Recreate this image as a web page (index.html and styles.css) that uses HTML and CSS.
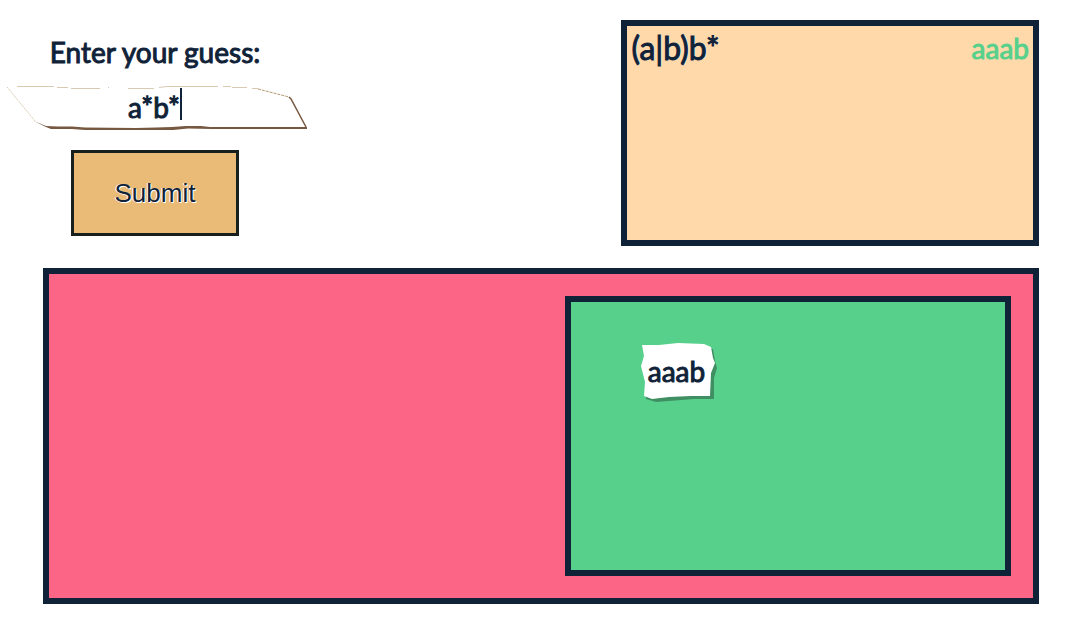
FILE: index.html
```html
<!DOCTYPE html>
<html lang="en">
<head>
  <meta charset="utf-8">
  <meta name="viewport" content="width=device-width, initial-scale=1">
  <title>Guess the expression</title>
  <link rel="stylesheet" href="styles.css">
</head>
<body>
  <main class="game">
    <div class="top">
      <form class="guess">
        <label class="guess-label" for="guess">Enter your guess:</label>
        <div class="guess-field">
          <svg class="guess-paper" viewBox="0 0 300 46" preserveAspectRatio="none" aria-hidden="true">
            <g fill="none" stroke="#d9cab2" stroke-width="1">
              <path d="M-1 3 27 37" stroke-dasharray="2 1"/>
              <path d="M9 2.500H46M49 3.500H60M63 4.500H92M100 3.500h1M120 4.500H146M151 3.500 159 2.500H210M215 2.500H223M224 3.500H239M244 4.500H250"/>
              <path d="M250 5 281 13" stroke="#b79a72" stroke-dasharray="3 1"/>
            </g>
            <path d="M281 13 283 15 298 43" fill="none" stroke="#775840" stroke-width="1.500"/>
            <path d="M26 37 38 42 50 42.500H64L77 43.500 128 44 148 43.500 164 43 178 42 193 42 202 43H299V45H204L180 44.500 165 46H77L64 45H43L38 43Z" fill="#775840"/>
          </svg>
          <input class="guess-input" id="guess" type="text" value="a*b*" autocomplete="off" spellcheck="false">
          <span class="caret" aria-hidden="true"></span>
        </div>
        <button class="submit" type="submit">Submit</button>
      </form>
      <section class="history" aria-label="Previous guesses">
        <div class="history-row">
          <span class="expression">(a|b)b*</span>
          <span class="sample">aaab</span>
        </div>
      </section>
    </div>
    <section class="arena" aria-label="Rejected words">
      <div class="accepted">
        <div class="word">
          <svg class="word-paper" viewBox="0 0 78 60" aria-hidden="true">
            <path d="M5 6 41 5 74 8 76 20 78 27 75 37V58H55L17 61 7 58Z" fill="#3f8f63"/>
            <path d="M3 4 20 4 39 2 65 3 72 6 74 17 76 22 72 32 71 55H52L30 56 13 58 5 55 6 41 2 25 5 15Z" fill="#fff"/>
          </svg>
          <span class="word-text">aaab</span>
        </div>
      </div>
    </section>
  </main>
</body>
</html>
```
FILE: styles.css
```css
* {
  box-sizing: border-box;
}

body {
  margin: 0;
  background: #fff;
  color: #102238;
  font-family: "Lato", sans-serif;
  font-size: 28px;
  line-height: 40px;
}

.game {
  display: flex;
  flex-direction: column;
  gap: 22px;
  min-height: 100vh;
  padding: 20px 37px 27px 8px;
}

.top {
  display: flex;
  justify-content: space-between;
  gap: 24px;
}

.guess {
  display: flex;
  flex-direction: column;
  align-items: center;
  width: 300px;
  padding-top: 12px;
}

.guess-label {
  margin-right: 6px;
  -webkit-text-stroke: 1px #102238;
}

.guess-field {
  position: relative;
  width: 100%;
  height: 46px;
  margin: 12px 0 20px;
}

.guess-paper {
  position: absolute;
  inset: 0;
  width: 100%;
  height: 100%;
  overflow: visible;
}

.guess-input {
  position: relative;
  width: 100%;
  height: 46px;
  padding: 0 8px 0 0;
  border: 0;
  outline: 0;
  background: transparent;
  color: inherit;
  font: inherit;
  text-align: center;
  -webkit-text-stroke: 1px #102238;
}

.caret {
  position: absolute;
  top: 4px;
  left: 172px;
  width: 2px;
  height: 32px;
  background: #102238;
}

.submit {
  width: 168px;
  height: 86px;
  margin-right: 6px;
  padding: 0;
  border: 3px solid #17201d;
  border-radius: 0;
  background: #e9bb77;
  color: #102238;
  font-family: "Liberation Sans", Arial, sans-serif;
  font-size: 26px;
  text-shadow: 1px 1px #fff, -1px 0 #fff;
}

.history {
  width: 40.5%;
  min-height: 226px;
  padding: 2px 4px;
  border: 6px solid #102238;
  background: #ffd9aa;
}

.history-row {
  display: flex;
  justify-content: space-between;
}

.expression {
  font-size: 32px;
  text-shadow: 1px 0 #fff;
  -webkit-text-stroke: 1px #102238;
}

.sample {
  color: #57d08c;
  -webkit-text-stroke: 1px #57d08c;
}

.arena {
  display: flex;
  flex: 1;
  justify-content: flex-end;
  min-height: 336px;
  margin-left: 35px;
  padding: 22px;
  border: 6px solid #102238;
  background: #fd6587;
}

.accepted {
  width: 47.4%;
  padding: 39px 68px;
  border: 6px solid #102238;
  background: #57d08c;
}

.word {
  display: grid;
  place-items: center;
  width: 78px;
  height: 60px;
}

.word-paper,
.word-text {
  grid-area: 1 / 1;
}

.word-paper {
  width: 78px;
  height: 60px;
  overflow: visible;
}

.word-text {
  padding-right: 4px;
  -webkit-text-stroke: 1px #102238;
}
```
